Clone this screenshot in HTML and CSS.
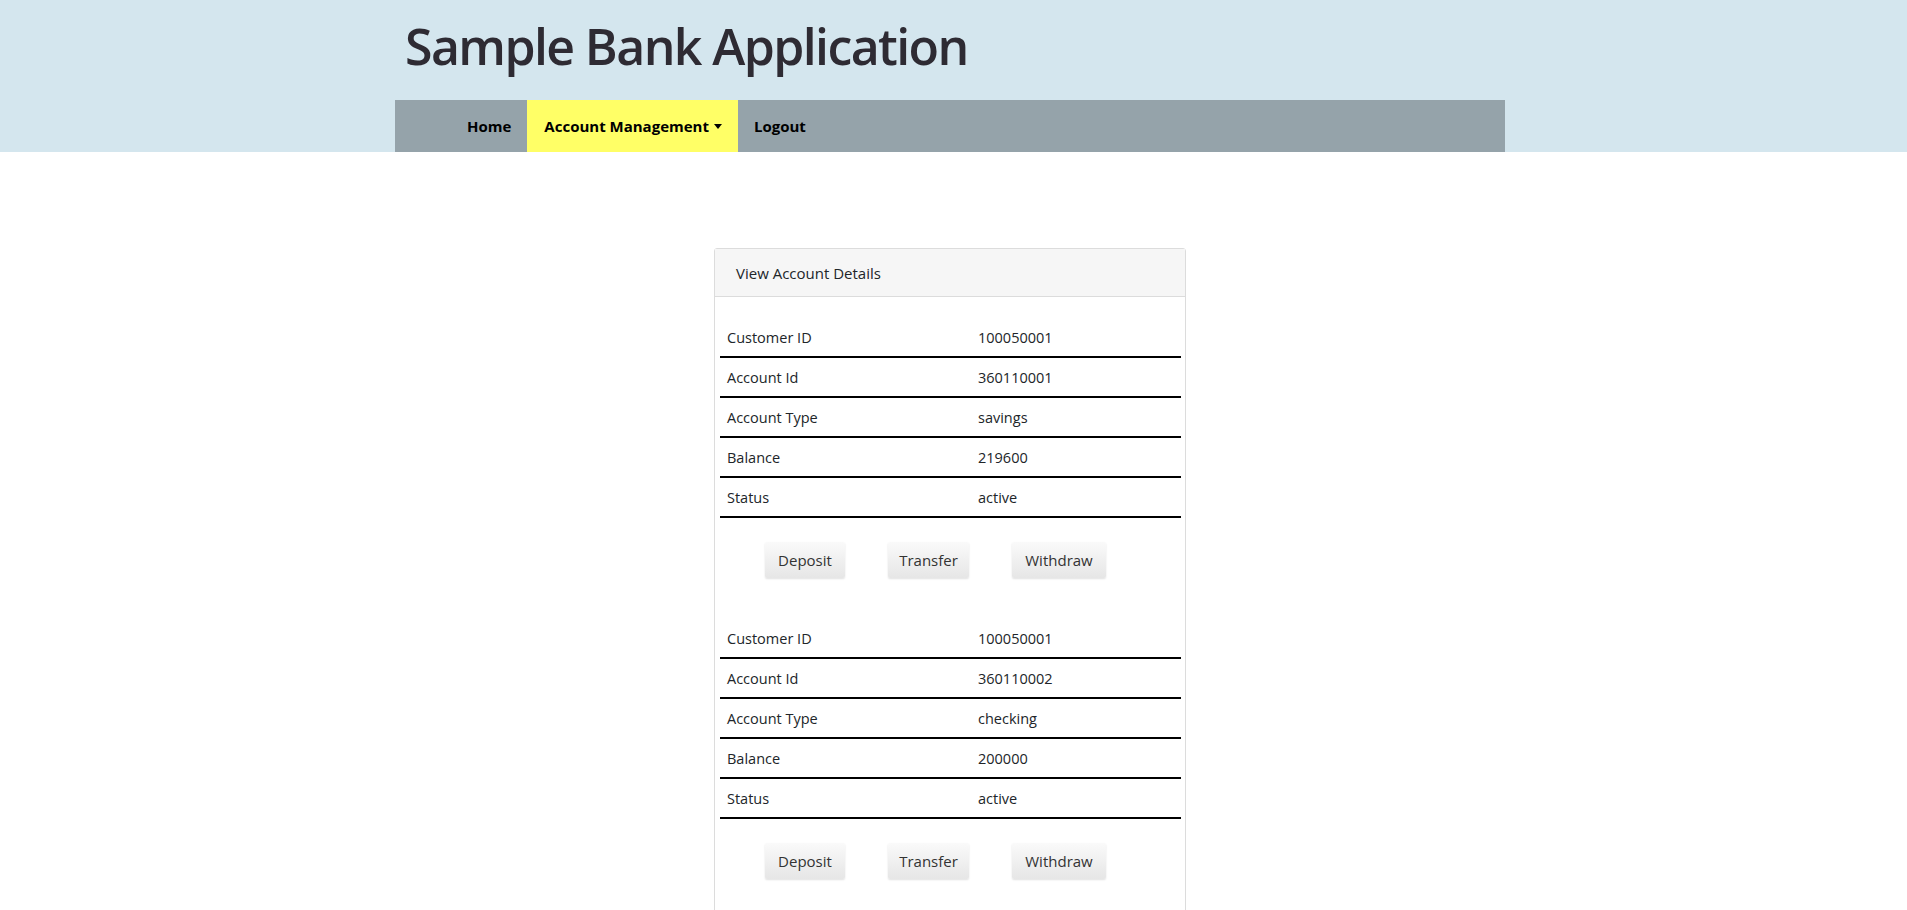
FILE: index.html
```html
<!DOCTYPE html>
<html>
<head>
<meta charset="utf-8">
<title>Sample Bank Application</title>
<link rel="stylesheet" href="styles.css">
</head>
<body>
<header class="site-header">
  <div class="container">
    <h1 class="brand">Sample Bank Application</h1>
    <nav class="navbar">
      <ul class="nav-list">
        <li class="nav-item"><a href="#">Home</a></li>
        <li class="nav-item active"><a href="#">Account Management <span class="caret"></span></a></li>
        <li class="nav-item"><a href="#">Logout</a></li>
      </ul>
    </nav>
  </div>
</header>
<main class="main">
  <section class="card">
    <div class="card-header">View Account Details</div>
    <div class="card-body">
      <div class="account">
        <table class="details">
          <tr><td class="label">Customer ID</td><td>100050001</td></tr>
          <tr><td class="label">Account Id</td><td>360110001</td></tr>
          <tr><td class="label">Account Type</td><td>savings</td></tr>
          <tr><td class="label">Balance</td><td>219600</td></tr>
          <tr><td class="label">Status</td><td>active</td></tr>
        </table>
        <div class="actions">
          <button class="btn btn-deposit">Deposit</button>
          <button class="btn btn-transfer">Transfer</button>
          <button class="btn btn-withdraw">Withdraw</button>
        </div>
      </div>
      <div class="account">
        <table class="details">
          <tr><td class="label">Customer ID</td><td>100050001</td></tr>
          <tr><td class="label">Account Id</td><td>360110002</td></tr>
          <tr><td class="label">Account Type</td><td>checking</td></tr>
          <tr><td class="label">Balance</td><td>200000</td></tr>
          <tr><td class="label">Status</td><td>active</td></tr>
        </table>
        <div class="actions">
          <button class="btn btn-deposit">Deposit</button>
          <button class="btn btn-transfer">Transfer</button>
          <button class="btn btn-withdraw">Withdraw</button>
        </div>
      </div>
    </div>
  </section>
</main>
</body>
</html>
```
FILE: styles.css
```css
html, body {
  margin: 0;
  padding: 0;
}
body {
  font-family: "Open Sans", "Noto Sans", "Liberation Sans", sans-serif;
  color: #212529;
  background: #fff;
  font-size: 14px;
  padding-right: 7px;
}
.site-header {
  background: #d4e6ee;
  margin-right: -7px;
  padding-right: 7px;
}
.container {
  width: 1110px;
  margin: 0 auto;
  padding: 0 15px;
}
.brand {
  margin: 0;
  padding: 15px 0 0 10px;
  height: 100px;
  box-sizing: border-box;
  font-size: 50px;
  font-weight: 600;
  line-height: 62px;
  color: #2e2b33;
  letter-spacing: -1.6px;
  white-space: nowrap;
}
.navbar {
  background: #95a3aa;
  height: 52px;
}
.nav-list {
  list-style: none;
  margin: 0;
  padding: 0 0 0 56px;
  display: flex;
  height: 100%;
}
.nav-item a {
  display: flex;
  align-items: center;
  height: 52px;
  padding: 0 16px;
  color: #000;
  font-weight: 700;
  font-size: 15px;
  text-decoration: none;
}
.nav-item.active a {
  background: #ffff66;
  padding: 0 16px 0 17px;
}
.caret {
  display: inline-block;
  margin-left: 5px;
  width: 0;
  height: 0;
  border-left: 4.5px solid transparent;
  border-right: 4.5px solid transparent;
  border-top: 5px solid #000;
}
.main {
  padding-top: 96px;
}
.card {
  width: 472px;
  margin: 0 auto;
  border: 1px solid #dcdcdc;
  border-radius: 3px;
  box-sizing: border-box;
}
.card-header {
  background: #f6f6f6;
  border-bottom: 1px solid #dcdcdc;
  height: 48px;
  box-sizing: border-box;
  padding: 0 21px;
  display: flex;
  align-items: center;
  font-size: 15px;
  color: #212529;
}
.card-body {
  padding: 21px 4px 48px 5px;
}
.account + .account {
  margin-top: 41px;
}
.details {
  width: 100%;
  border-collapse: collapse;
  font-size: 14.5px;
  color: #212529;
}
.details td {
  height: 38px;
  padding: 0 7px;
  border-bottom: 2px solid #000;
  vertical-align: middle;
}
.details td.label {
  width: 237px;
}
.actions {
  display: flex;
  justify-content: flex-start;
  padding: 24px 0 0 45px;
  gap: 43px;
}
.btn {
  height: 36px;
  border: none;
  border-radius: 2px;
  background: linear-gradient(#fafafa, #e6e6e6);
  box-shadow: 0 1px 2px rgba(0,0,0,0.12);
  font-family: inherit;
  font-size: 15px;
  color: #333;
  padding: 0;
  cursor: pointer;
}
.btn-deposit { width: 80px; }
.btn-transfer { width: 81px; }
.btn-withdraw { width: 94px; }
```
